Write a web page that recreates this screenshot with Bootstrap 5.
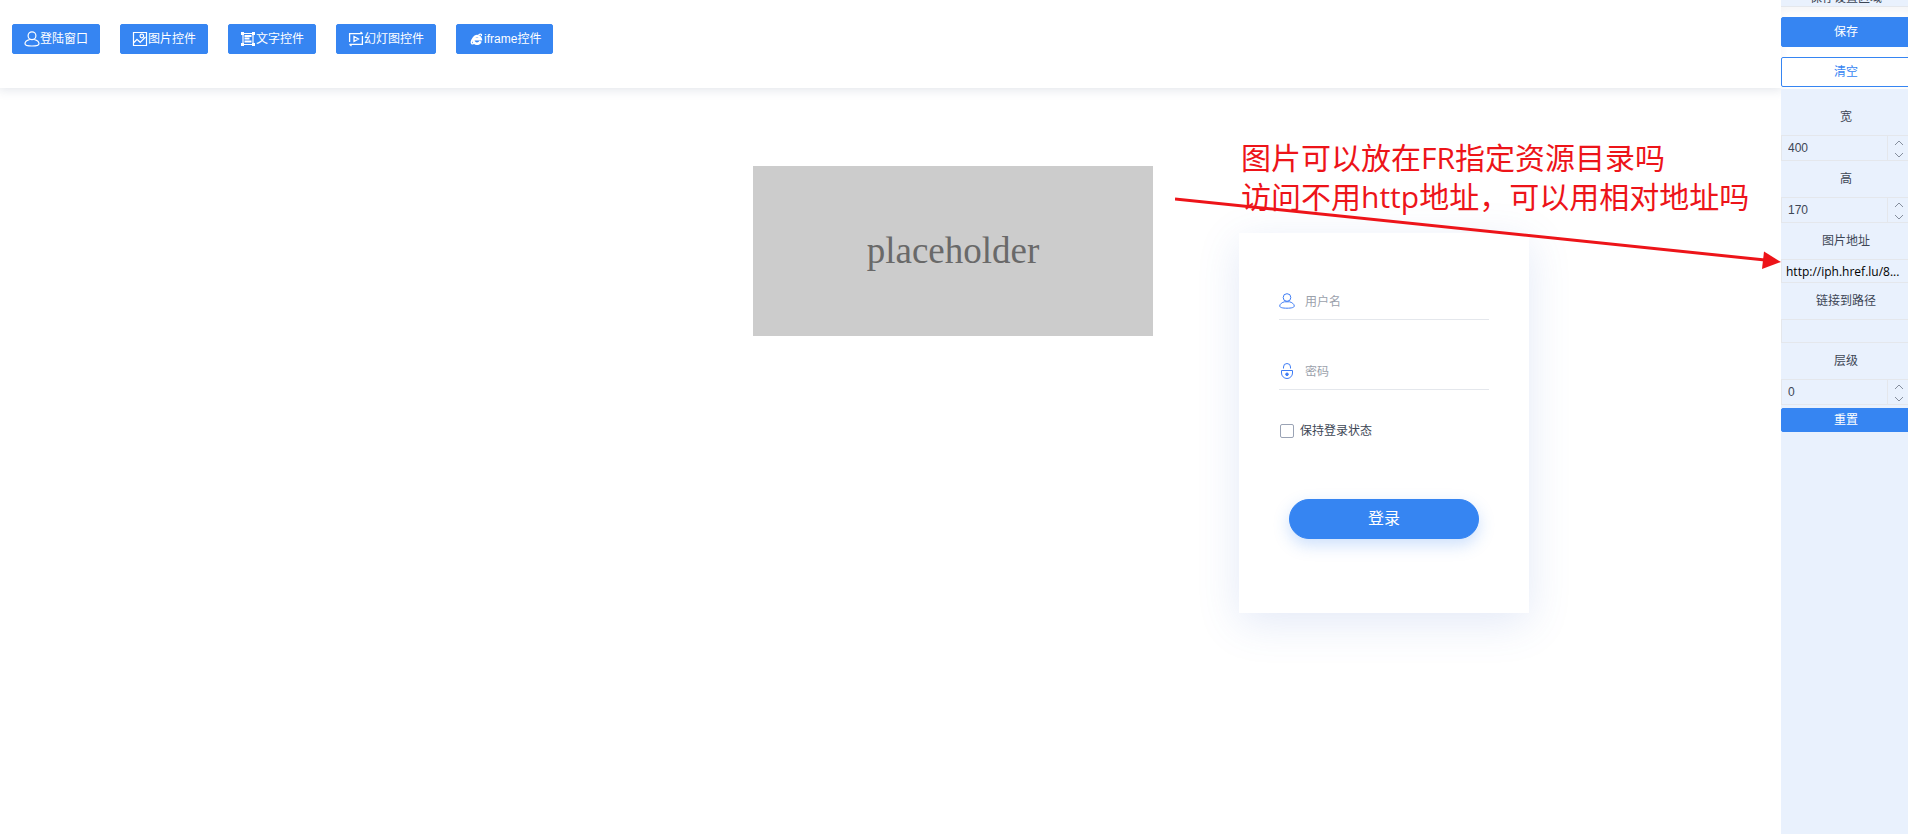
<!DOCTYPE html>
<html lang="zh-CN">
<head>
<meta charset="utf-8">
<meta name="viewport" content="width=device-width, initial-scale=1">
<title>登录页编辑器</title>
<link rel="stylesheet" href="https://cdn.jsdelivr.net/npm/bootstrap@5.3.0/dist/css/bootstrap.min.css">
<style>
  :root { --brand: #3685f2; --panel: #e9f1fd; --line: #e4e7ec; --ink: #3d4655; --note: #ed1419; }
  body { font: 12px/16px "Liberation Sans", "Noto Sans CJK SC", sans-serif; color: var(--ink); background: #fff; }
  .btn { --bs-btn-font-size: 12px; --bs-btn-border-radius: 2px; --bs-btn-line-height: 16px; --bs-btn-padding-y: 6px; --bs-btn-padding-x: 11px; }
  .btn-primary { --bs-btn-bg: var(--brand); --bs-btn-border-color: var(--brand); }
  .btn-outline-primary { --bs-btn-color: var(--brand); --bs-btn-border-color: var(--brand); --bs-btn-bg: #fff; }

  .toolbar { height: 88px; padding: 24px 12px; gap: 20px; box-shadow: 0 0 10px 2px rgba(60, 75, 110, .14); }
  .toolbar .btn { height: 30px; }

  /* free canvas: each widget sits where the user dropped it */
  .stage > * { position: absolute; }
  .pic-widget { left: 753px; top: 78px; width: 400px; height: 170px; background: #ccc; color: #696969; font: 37px/40px "Liberation Serif", serif; }
  .login-widget { left: 1239px; top: 145px; width: 290px; height: 380px; padding: 49px 40px; background: #fff; box-shadow: 0 10px 40px rgba(70, 110, 200, .15); }
  .line-field { height: 38px; border-bottom: 1px solid var(--line); gap: 10px; margin-bottom: 32px; }
  .line-field input { font-size: 12px; min-width: 0; padding: 2px 0 0; }
  .line-field input::placeholder { color: #9ba1ab; }
  .keep { gap: 6px; padding: 1px 0 0 1px; }
  .keep input { width: 14px; height: 14px; margin: 0; border: 1px solid #9aa3b5; border-radius: 2px !important; }
  .login-btn { width: 190px; height: 40px; --bs-btn-font-size: 16px; box-shadow: 0 6px 16px rgba(54, 133, 242, .25); margin-top: 60px; }
  .note { left: 1241px; top: 50px; font: 30px/39px "Open Sans", "Noto Sans CJK SC", sans-serif; color: var(--note); white-space: nowrap; }
  .note-arrow { left: 1175px; top: 108px; width: 606px; height: 76px; pointer-events: none; }

  .side { flex: 0 0 127px; background: var(--panel); }
  .side-inner { width: 130px; }
  .side-title { margin-top: -10px; background: var(--panel); border-bottom: 1px solid var(--line); }
  .side-actions { background: #fff; gap: 10px; padding: 10px 0 2px; box-shadow: inset 0 4px 8px rgba(60, 75, 110, .06); }
  .side-actions .btn { height: 30px; }
  .props { padding-top: 10px; }
  .props label { line-height: 36px; display: block; text-align: center; }
  .spin { height: 26px; border: 1px solid var(--line); }
  .spin input { font-size: 12px; color: var(--ink); padding: 0 6px; min-width: 0; appearance: textfield; -moz-appearance: textfield; }
  .spin input::-webkit-inner-spin-button { display: none; }
  .spin-keys { flex: 0 0 23px; border-left: 1px solid var(--line); }
  .spin-keys button { height: 12px; color: #858e9d; line-height: 1; }
  .path-field { display: block; width: 130px; height: 24px; font: 12px/20px "Open Sans", "Noto Sans CJK SC", sans-serif; color: #000; border: 1px solid var(--line); padding: 0 4px; background: transparent; text-overflow: ellipsis; }
  .reset { height: 24px; --bs-btn-padding-y: 3px; margin-top: 3px; }
</style>
</head>
<body>
<div class="d-flex min-vh-100 overflow-hidden">
  <div class="flex-grow-1 d-flex flex-column">
    <header class="toolbar d-flex align-items-start bg-white">
      <button type="button" class="btn btn-primary d-flex align-items-center">
        <svg width="16" height="16" viewBox="0 0 16 16" fill="none" stroke="currentColor" stroke-width="1.2"><circle cx="8" cy="4.7" r="3.9"/><path d="M5.8 8.5C3 9.2 1 10.8 1 12.7 1 14.4 3.2 15 8 15s7-.6 7-2.3c0-1.9-2-3.5-4.8-4.2"/></svg>登陆窗口</button>
      <button type="button" class="btn btn-primary d-flex align-items-center">
        <svg width="16" height="16" viewBox="0 0 16 16" fill="none" stroke="currentColor" stroke-width="1.2"><path d="M1.5 1.5h13v13h-13zM2 11.5l3-3.2 3.2 3L13.5 6"/><circle cx="9.8" cy="5" r="1.8"/></svg>图片控件</button>
      <button type="button" class="btn btn-primary d-flex align-items-center">
        <svg width="16" height="16" viewBox="0 0 16 16" fill="none" stroke="currentColor" stroke-width="1.2"><path d="M3 1v14M13 1v14M1 2.5h14M1 13.5h14"/><path d="M4.5 5h7M4.5 7.5h5M4.500 10.500h7" stroke-width="1.8"/><path d="M1 1h3v3H1zM12 1h3v3h-3zM1 12h3v3H1zM12 12h3v3h-3z" fill="currentColor" stroke="none"/></svg>文字控件</button>
      <button type="button" class="btn btn-primary d-flex align-items-center">
        <svg width="16" height="16" viewBox="0 0 16 16" fill="none" stroke="currentColor" stroke-width="1.3"><path d="M1.600 11V2.700h12.800M12.500 1l2 1.700M14.400 5v8.300H1.600M3.500 15l-2-1.700M6 5.500v5L10.500 8z"/></svg>幻灯图控件</button>
      <button type="button" class="btn btn-primary d-flex align-items-center">
        <svg width="16" height="16" viewBox="0 0 16 16" fill="none" stroke="currentColor"><path d="M12.600 10.300A3.800 3.800 0 1 1 12.800 8.300H6" stroke-width="2.600"/><path d="M10.500 3.800c2.300-1.200 3.600-.6 2.700 1.200M5 7.500C3.200 10 2.800 12 3.800 12.700c.7.400 1.700 0 2.600-.7" stroke-width="1.400"/></svg>iframe控件</button>
    </header>

    <main class="stage position-relative flex-grow-1">
      <div class="pic-widget d-flex align-items-center justify-content-center">placeholder</div>

      <form class="login-widget">
        <div class="line-field d-flex align-items-center">
          <svg width="16" height="16" viewBox="0 0 16 16" fill="none" stroke="#3f7df5"><circle cx="8" cy="4.500" r="3.800"/><path d="M5.500 8.800h5c2.200.4 4.800 2.300 4.800 4.200 0 1.500-2.800 2.200-7.300 2.200S.7 14.500.7 13c0-1.900 2.600-3.800 4.800-4.200z"/></svg>
          <input type="text" class="border-0 flex-grow-1 bg-transparent" placeholder="用户名" aria-label="用户名">
        </div>
        <div class="line-field d-flex align-items-center">
          <svg width="16" height="16" viewBox="0 0 16 16" fill="none" stroke="#3f7df5"><path d="M4.500 5.500V4a3.500 3.500 0 0 1 7 0v1.500M2.500 7.500h11V10a5.500 5.500 0 0 1-11 0z"/><circle cx="8" cy="11.300" r="1.300" fill="#3f7df5"/></svg>
          <input type="password" class="border-0 flex-grow-1 bg-transparent" placeholder="密码" aria-label="密码">
        </div>
        <div class="keep d-flex align-items-center">
          <input class="form-check-input" type="checkbox" id="keep"><label for="keep">保持登录状态</label>
        </div>
        <button type="button" class="login-btn btn btn-primary rounded-pill d-block mx-auto">登录</button>
      </form>

      <div class="note">图片可以放在FR指定资源目录吗<br>访问不用http地址，可以用相对地址吗</div>
      <svg class="note-arrow" viewBox="0 0 606 76" aria-hidden="true"><path d="M0 3L590 64" stroke="#ed1419" stroke-width="3"/><path d="M606 66L589 55.500 587 73z" fill="#ed1419"/></svg>
    </main>
  </div>

  <aside class="side overflow-hidden">
    <div class="side-inner">
      <div class="side-title text-center">保存设置区域</div>
      <div class="side-actions d-flex flex-column">
        <button type="button" class="btn btn-primary">保存</button>
        <button type="button" class="btn btn-outline-primary">清空</button>
      </div>
      <form class="props">
        <label for="w">宽</label>
        <div class="spin d-flex">
          <input id="w" type="number" value="400" class="border-0 bg-transparent flex-grow-1">
          <div class="spin-keys d-flex flex-column">
            <button type="button" class="border-0 bg-transparent p-0" aria-label="增加"><svg width="10" height="6" viewBox="0 0 10 6" fill="none" stroke="currentColor"><path d="M1 5l4-4 4 4"/></svg></button>
            <button type="button" class="border-0 bg-transparent p-0" aria-label="减少"><svg width="10" height="6" viewBox="0 0 10 6" fill="none" stroke="currentColor"><path d="M1 1l4 4 4-4"/></svg></button>
          </div>
        </div>
        <label for="h">高</label>
        <div class="spin d-flex">
          <input id="h" type="number" value="170" class="border-0 bg-transparent flex-grow-1">
          <div class="spin-keys d-flex flex-column">
            <button type="button" class="border-0 bg-transparent p-0" aria-label="增加"><svg width="10" height="6" viewBox="0 0 10 6" fill="none" stroke="currentColor"><path d="M1 5l4-4 4 4"/></svg></button>
            <button type="button" class="border-0 bg-transparent p-0" aria-label="减少"><svg width="10" height="6" viewBox="0 0 10 6" fill="none" stroke="currentColor"><path d="M1 1l4 4 4-4"/></svg></button>
          </div>
        </div>
        <label for="src">图片地址</label>
        <input id="src" type="text" class="path-field" value="http://iph.href.lu/8...">
        <label for="link">链接到路径</label>
        <input id="link" type="text" class="path-field">
        <label for="z">层级</label>
        <div class="spin d-flex">
          <input id="z" type="number" value="0" class="border-0 bg-transparent flex-grow-1">
          <div class="spin-keys d-flex flex-column">
            <button type="button" class="border-0 bg-transparent p-0" aria-label="增加"><svg width="10" height="6" viewBox="0 0 10 6" fill="none" stroke="currentColor"><path d="M1 5l4-4 4 4"/></svg></button>
            <button type="button" class="border-0 bg-transparent p-0" aria-label="减少"><svg width="10" height="6" viewBox="0 0 10 6" fill="none" stroke="currentColor"><path d="M1 1l4 4 4-4"/></svg></button>
          </div>
        </div>
        <button type="button" class="reset btn btn-primary w-100">重置</button>
      </form>
    </div>
  </aside>
</div>
<script src="https://cdn.jsdelivr.net/npm/bootstrap@5.3.0/dist/js/bootstrap.bundle.min.js"></script>
</body>
</html>
